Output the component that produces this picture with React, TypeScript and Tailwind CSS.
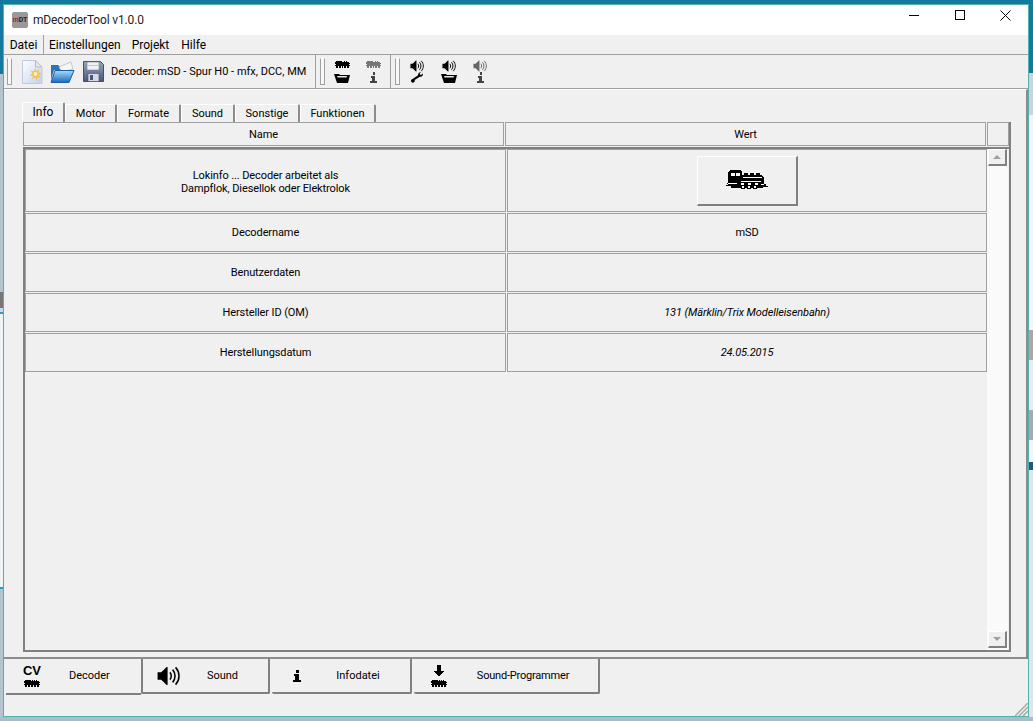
import React from "react";

const font = { fontFamily: 'Roboto, "Noto Sans", sans-serif' };

function Loco({ className = "", color = "#000" }: { className?: string; color?: string }) {
  return (
    <svg viewBox="0 0 16 8" className={className} shapeRendering="crispEdges">
      <path fill={color} d="M0 2h1V1h6v1h1V1h1v1h1V1h1v1h1V1h1v1h2v1h1v1h-1v1h1v1H0V5h1V4H0z" />
      <path fill={color} d="M1 6h2v2H1zM4 6h2v2H4zM7 6h2v2H7zM10 6h2v2h-2zM13 6h2v2h-2z" />
    </svg>
  );
}

function Tray({ className = "" }: { className?: string }) {
  return (
    <svg viewBox="0 0 16 10" className={className}>
      <path fill="#000" d="M0 1h5l1 1h10l-2 8H3z" />
      <path fill="#e8e8e8" d="M3 3h10l-.5 1.5H3.6z" />
    </svg>
  );
}

function InfoI({ className = "", color = "#000" }: { className?: string; color?: string }) {
  return (
    <svg viewBox="0 0 8 12" className={className} shapeRendering="crispEdges">
      <path fill={color} d="M3 0h3v3H3zM1 4h5v6h2v2H0v-2h2V6H1z" />
    </svg>
  );
}

function Speaker({ className = "", color = "#000" }: { className?: string; color?: string }) {
  return (
    <svg viewBox="0 0 24 22" className={className} fill="none">
      <path fill={color} d="M0 7h4l6-6h1v20h-1l-6-6H0z" />
      <path stroke={color} strokeWidth="1.7" d="M13.5 7c2 2 2 6 0 8M16.5 4c3.6 4 3.6 10 0 14M19.8 1.5c5 5.500 5 13.500 0 19" />
    </svg>
  );
}

function Wrench({ className = "" }: { className?: string }) {
  return (
    <svg viewBox="0 0 14 12" className={className}>
      <path fill="#000" d="M14 1.200 11.600 3 10.400 2.400 10.300 1 12 0C9.800-.4 8 1 8.300 3.300L1.800 7.700C-.5 8-.6 11.600 1.700 12c2 .3 3.300-1.500 2.600-3.200L10.300 5c2.200.8 4-1.300 3.700-3.800z" />
    </svg>
  );
}

function NewDoc() {
  return (
    <svg width="21" height="24" viewBox="0 0 21 24">
      <defs>
        <linearGradient id="doc" x1="0" y1="0" x2="1" y2="1">
          <stop offset="0" stopColor="#ffffff" />
          <stop offset="1" stopColor="#c3d0ee" />
        </linearGradient>
      </defs>
      <path fill="url(#doc)" stroke="#c0cade" d="M.5.500h13l6.500 6.500v16.500H.5z" />
      <path fill="#e4e9f6" stroke="#aebbd6" d="M13.500.500v6.500h6.500z" />
      <path fill="#f6c04a" d="M13 8l1.500 3 3-2-1 3.500 3.500.5-3 2 2 3-3.500-1-.5 3.500-2-3-3 2 1-3.500-3.500-.5 3-2-2-3 3.500 1z" />
      <circle cx="13.500" cy="14" r="2" fill="#fff3c4" />
    </svg>
  );
}

function OpenFolder() {
  return (
    <svg width="25" height="22" viewBox="0 0 25 22">
      <defs>
        <linearGradient id="fold" x1="0" y1="0" x2="0" y2="1">
          <stop offset="0" stopColor="#a9daf8" />
          <stop offset="1" stopColor="#1a68c0" />
        </linearGradient>
      </defs>
      <path fill="#2c72b8" d="M1 4h7l2 2h7v3H4L1 19z" />
      <path fill="#f7f7f2" stroke="#a9b7c6" strokeWidth=".7" d="M9 6l12-5 2 7-11 3z" />
      <path fill="url(#fold)" stroke="#1a5ea8" d="M5 9.500h19L19 21.500H1z" />
    </svg>
  );
}

function Floppy() {
  return (
    <svg width="21" height="21" viewBox="0 0 21 21">
      <defs>
        <linearGradient id="flop" x1="0" y1="0" x2="0" y2="1">
          <stop offset="0" stopColor="#98a5c0" />
          <stop offset="1" stopColor="#4a5675" />
        </linearGradient>
      </defs>
      <path fill="url(#flop)" stroke="#454f6c" d="M.5.500h17l3 3v17H.5z" />
      <path fill="#eef0f4" stroke="#7a85a0" strokeWidth=".6" d="M4 1h12v8H4z" />
      <path fill="#c0c7d6" d="M4 4h12v1H4z" />
      <path fill="#d3d8e3" stroke="#454f6c" strokeWidth=".6" d="M5 12.500h11v8H5z" />
      <path fill="#4a5572" d="M7 14h3v5H7z" />
    </svg>
  );
}

function BigLoco() {
  return (
    <svg width="42" height="20" viewBox="0 0 42 20" shapeRendering="crispEdges">
      <path fill="#000" d="M3 1h1V0h11v1h1v4h2V3h4V5h2V3h4v2h2V3h4v2h2v1h1v1h1v7h2v2h3v1h-6v1H5v-2H0v-1h2v-1H1V13h1V2h1z" />
      <path fill="#fff" d="M5 3h4v3H5zM10 3h4v3h-4zM17 7h19v1H17zM15 11h20v1H15zM2 13h9v1H2zM35 14h3v1h-3z" />
      <path fill="#fff" d="M15 13h3v2h-3zM22 13h3v2h-3zM29 13h3v2h-3z" />
      <path fill="#fff" stroke="#000" d="M15.500 15.500h3v3h-3zM21.500 15.500h3v3h-3zM27.500 15.500h3v3h-3z" />
    </svg>
  );
}

function Handle() {
  return <div className="h-[27px] w-[5px] border border-t-white border-l-[#a0a0a0] border-r-[#a0a0a0] border-b-[#a0a0a0] bg-[#f8f8f8]" />;
}

function IconStack({ top, bottom }: { top: React.ReactNode; bottom: React.ReactNode }) {
  return <div className="flex h-[23px] w-[18px] flex-col items-center justify-between">{top}{bottom}</div>;
}

const tabs = [
  { label: "Info", w: "w-[43px]" },
  { label: "Motor", w: "w-[52px]" },
  { label: "Formate", w: "w-[64px]" },
  { label: "Sound", w: "w-[54px]" },
  { label: "Sonstige", w: "w-[65px]" },
  { label: "Funktionen", w: "w-[76px]" },
];

const rows = [
  { h: "h-[39px]", name: "Decodername", value: "mSD" },
  { h: "h-[39px]", name: "Benutzerdaten", value: "" },
  { h: "h-[39px]", name: "Hersteller ID (OM)", value: "131 (Märklin/Trix Modelleisenbahn)", italic: true },
  { h: "h-[39px]", name: "Herstellungsdatum", value: "24.05.2015", italic: true },
];

const cell = "flex items-center justify-center border border-[#a0a0a0] bg-[#f0f0f0] pt-[2px] text-center text-[11px] tracking-[-0.1px]";

function BottomTab({ w, icon, label, pad, left }: { w: string; icon: React.ReactNode; label: string; pad: string; left?: boolean }) {
  return (
    <div className={`${w} flex h-[35px] items-center rounded-b-[2px] border-r-2 border-b-2 border-r-[#808080] border-b-[#808080] ${left ? "border-l-2 border-l-[#808080]" : ""}`}>
      <div className="flex w-[50px] shrink-0 justify-center">{icon}</div>
      <div className={`${pad} flex-1 pt-[1px] text-center text-[11px] whitespace-nowrap`}>{label}</div>
    </div>
  );
}

export default function App() {
  return (
    <div className="flex h-[721px] w-[1033px] flex-col overflow-hidden bg-[#a9bdc9] text-[12px] text-black" style={font}>
      <div className="h-[4px] shrink-0 bg-[#14789f]" />
      <div className="flex h-[713px] shrink-0">
        {/* desktop left */}
        <div className="flex w-[3px] shrink-0 flex-col">
          <div className="h-[70px] bg-[#14789f]" />
          <div className="h-[218px] bg-[#b4c4cf]" />
          <div className="h-[16px] bg-[#777]" />
          <div className="h-[4px] bg-[#cfd8de]" />
          <div className="h-[2px] bg-[#2a9ad6]" />
          <div className="h-[273px] bg-[#f0f3f5]" />
          <div className="h-[2px] bg-[#2a9ad6]" />
          <div className="flex-1 bg-[#b4c4cf]" />
        </div>

        {/* window */}
        <div className="flex h-[713px] w-[1026px] shrink-0 flex-col border border-[#4fb3a9] bg-[#f0f0f0]">
          {/* title bar */}
          <div className="flex h-[30px] shrink-0 items-center bg-white pl-[8px]">
            <div className="flex h-[16px] w-[16px] flex-col items-center justify-center rounded-[2px] bg-[#999]">
              <span className="text-[7px] leading-[7px] font-bold text-[#222]"><span className="text-[#b02020]">m</span>DT</span>
            </div>
            <span className="ml-[5px] text-[12px] tracking-[-0.15px] text-[#222]">mDecoderTool v1.0.0</span>
            <div className="ml-auto flex h-[20px] items-center self-start pr-[17px]">
              <div className="mr-[36px] h-[1px] w-[10px] bg-black" />
              <div className="mr-[35px] h-[10px] w-[10px] border border-black" />
              <svg width="11" height="11" viewBox="0 0 11 11"><path stroke="#000" d="M.5.500l10 10M10.500.500l-10 10" /></svg>
            </div>
          </div>

          {/* menu */}
          <div className="flex h-[20px] shrink-0 items-center border-b border-[#a0a0a0] bg-[#f0f0f0]">
            <div className="flex h-[19px] w-[40px] items-center justify-center border-r border-[#a0a0a0]">Datei</div>
            <span className="ml-[5px]">Einstellungen</span>
            <span className="ml-[11px]">Projekt</span>
            <span className="ml-[12px]">Hilfe</span>
          </div>

          {/* toolbar */}
          <div className="flex h-[34px] shrink-0 items-center border-b border-[#a0a0a0] bg-[#f0f0f0]">
            <div className="ml-[3px]"><Handle /></div>
            <div className="ml-[10px]"><NewDoc /></div>
            <div className="ml-[7px]"><OpenFolder /></div>
            <div className="ml-[8px]"><Floppy /></div>
            <span className="ml-[7px] w-[196px] pt-[1px] text-[11px] whitespace-nowrap">Decoder: mSD - Spur H0 - mfx, DCC, MM</span>
            <div className="ml-[8px] h-full w-[1px] bg-[#a0a0a0]" />
            <div className="ml-[4px]"><Handle /></div>
            <div className="ml-[8px]">
              <IconStack top={<Loco className="h-[8px] w-[15px]" />} bottom={<Tray className="h-[10px] w-[16px]" />} />
            </div>
            <div className="ml-[13px]">
              <IconStack top={<Loco className="h-[8px] w-[15px]" color="#777" />} bottom={<InfoI className="h-[11px] w-[7px]" color="#444" />} />
            </div>
            <div className="ml-[8px] h-full w-[1px] bg-[#a0a0a0]" />
            <div className="ml-[4px]"><Handle /></div>
            <div className="ml-[8px]">
              <IconStack top={<Speaker className="h-[12px] w-[14px]" />} bottom={<Wrench className="h-[11px] w-[12px]" />} />
            </div>
            <div className="ml-[14px]">
              <IconStack top={<Speaker className="h-[12px] w-[14px]" />} bottom={<Tray className="h-[10px] w-[16px]" />} />
            </div>
            <div className="ml-[13px]">
              <IconStack top={<Speaker className="h-[12px] w-[14px]" color="#666" />} bottom={<InfoI className="h-[11px] w-[7px]" color="#444" />} />
            </div>
          </div>

          {/* main panel */}
          <div className="flex h-[570px] shrink-0 flex-col border-t border-r-2 border-b-2 border-t-white border-r-[#8c8c8c] border-b-[#8c8c8c] bg-[#f0f0f0] pt-[12px] pr-[16px] pl-[18px]">
            {/* tabs */}
            <div className="flex h-[20px] shrink-0 items-end">
              {tabs.map((t, i) => (
                <div
                  key={t.label}
                  className={`${t.w} flex items-center justify-center rounded-t-[2px] border-t border-l border-t-white border-l-white border-r-2 border-r-[#8c8c8c] ${i === 0 ? "h-[20px] pb-[1px] text-[12px]" : "h-[18px] pt-[1px] text-[11px]"}`}
                >
                  {t.label}
                </div>
              ))}
            </div>

            {/* frame */}
            <div className="ml-[1px] flex h-[530px] w-[988px] shrink-0 flex-col border-r-2 border-b-2 border-r-[#808080] border-b-[#808080] bg-[#f0f0f0]">
              {/* header */}
              <div className="flex h-[24px] shrink-0 gap-[1px]">
                <div className={`${cell} w-[481px]`}>Name</div>
                <div className={`${cell} w-[481px]`}>Wert</div>
                <div className={`${cell} w-[22px]`} />
              </div>
              <div className="mt-[1px] h-[2px] shrink-0 bg-[#808080]" />
              {/* body */}
              <div className="flex min-h-0 flex-1 border-l-2 border-l-[#808080]">
                <div className="flex w-[962px] flex-col gap-[1px]">
                  <div className="flex h-[63px] gap-[1px]">
                    <div className={`${cell} w-[481px] leading-[13px]`}>
                      <div>Lokinfo ... Decoder arbeitet als<br />Dampflok, Diesellok oder Elektrolok</div>
                    </div>
                    <div className="flex w-[480px] items-center justify-center border border-[#a0a0a0]">
                      <div className="flex h-[50px] w-[101px] items-center justify-center border-t border-l border-t-white border-l-white border-r-2 border-b-2 border-r-[#808080] border-b-[#808080]">
                        <BigLoco />
                      </div>
                    </div>
                  </div>
                  {rows.map((r) => (
                    <div key={r.name} className={`flex ${r.h} gap-[1px]`}>
                      <div className={`${cell} w-[481px]`}>{r.name}</div>
                      <div className={`${cell} w-[480px] ${r.italic ? "italic" : ""}`}>{r.value}</div>
                    </div>
                  ))}
                </div>
                {/* scrollbar */}
                <div className="flex w-[21px] flex-col bg-[#fafafa] pb-[2px] pl-[1px]">
                  <div className="flex h-[17px] w-[19px] shrink-0 items-center justify-center border-t border-l border-t-white border-l-white border-r-2 border-b-2 border-r-[#808080] border-b-[#808080] bg-[#f0f0f0]">
                    <div className="h-0 w-0 border-x-[4px] border-b-[4px] border-x-transparent border-b-[#a0a0a0]" />
                  </div>
                  <div className="flex-1" />
                  <div className="flex h-[17px] w-[19px] shrink-0 items-center justify-center border-t border-l border-t-white border-l-white border-r-2 border-b-2 border-r-[#808080] border-b-[#808080] bg-[#f0f0f0]">
                    <div className="h-0 w-0 border-x-[4px] border-t-[4px] border-x-transparent border-t-[#a0a0a0]" />
                  </div>
                </div>
              </div>
            </div>
          </div>

          {/* bottom tabs */}
          <div className="relative flex min-h-0 flex-1 items-start pl-[2px]">
            <div className="flex h-[36px] w-[135px] items-center border-b-2 border-b-[#808080]">
              <div className="ml-[17px] flex w-[18px] shrink-0 flex-col items-center">
                <span className="text-[13px] leading-[12px] font-bold" style={{ fontFamily: '"Liberation Sans", sans-serif' }}>CV</span>
                <Loco className="mt-[2px] h-[8px] w-[18px]" />
              </div>
              <span className="ml-[28px] text-[11px]">Decoder</span>
            </div>
            <BottomTab w="w-[129px]" icon={<Speaker className="h-[20px] w-[23px]" />} label="Sound" pad="pr-[16px]" left />
            <div className="w-[2px] shrink-0" />
            <BottomTab w="w-[140px]" icon={<InfoI className="h-[12px] w-[8px]" />} label="Infodatei" pad="pr-[16px]" />
            <div className="w-[2px] shrink-0" />
            <BottomTab
              w="w-[186px]"
              icon={
                <div className="flex flex-col items-center">
                  <svg width="10" height="12" viewBox="0 0 10 12" shapeRendering="crispEdges"><path fill="#000" d="M3 0h4v6h3L5 12 0 6h3z" /></svg>
                  <Loco className="mt-[2px] h-[8px] w-[18px]" />
                </div>
              }
              label="Sound-Programmer"
              pad="pr-[16px] tracking-[-0.2px]"
            />
            <svg className="absolute right-0 bottom-0" width="13" height="13" viewBox="0 0 13 13">
              <path stroke="#a8a8a8" strokeWidth="1.500" d="M0 13 13 0M4 13l9-9M8 13l5-5" />
            </svg>
          </div>
        </div>

        {/* desktop right */}
        <div className="flex w-[4px] shrink-0 flex-col">
          <div className="h-[69px] bg-[#14789f]" />
          <div className="h-[42px] bg-[#cbd4da]" />
          <div className="h-[215px] bg-[#f2f4f5]" />
          <div className="h-[30px] bg-[#b0a59f]" />
          <div className="h-[50px] bg-[#e8ecee]" />
          <div className="h-[30px] bg-[#a5abb0]" />
          <div className="h-[22px] bg-[#f2f4f5]" />
          <div className="h-[8px] bg-[#1c5a8a]" />
          <div className="flex-1 bg-[#dfe5e9]" />
        </div>
      </div>
      <div className="flex-1 bg-[#a9bdc9]" />
    </div>
  );
}
